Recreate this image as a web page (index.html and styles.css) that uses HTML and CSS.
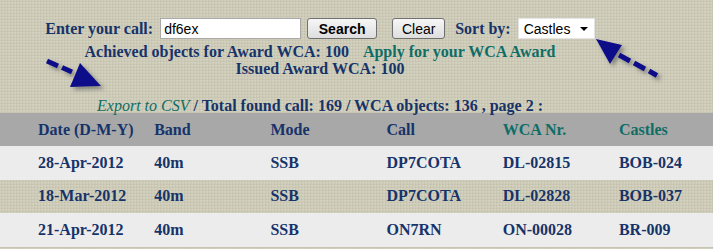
FILE: index.html
```html
<!DOCTYPE html>
<html>
<head>
<meta charset="utf-8">
<link rel="stylesheet" href="styles.css">
</head>
<body>
<div class="page">
  <div class="top">
    <form class="search-row">
      <label class="lbl">Enter your call:</label>
      <input class="call-input" type="text" value="df6ex">
      <button class="btn btn-search" type="button">Search</button>
      <button class="btn btn-clear" type="button">Clear</button>
      <label class="lbl sort-lbl">Sort by:</label>
      <div class="select"><span>Castles</span><span class="caret"></span></div>
    </form>
    <div class="line achieved">Achieved objects for Award WCA: 100 <a class="teal apply">Apply for your WCA Award</a></div>
    <div class="line issued">Issued Award WCA: 100</div>
    <div class="line export"><a class="teal csv">Export to CSV</a> / Total found call: 169 / WCA objects: 136 , page 2 :</div>
  </div>

  <div class="table">
    <div class="tr head">
      <div>Date (D-M-Y)</div><div>Band</div><div>Mode</div><div>Call</div><div class="teal">WCA Nr.</div><div class="teal">Castles</div>
    </div>
    <div class="tr light">
      <div>28-Apr-2012</div><div>40m</div><div>SSB</div><div>DP7COTA</div><div>DL-02815</div><div>BOB-024</div>
    </div>
    <div class="tr">
      <div>18-Mar-2012</div><div>40m</div><div>SSB</div><div>DP7COTA</div><div>DL-02828</div><div>BOB-037</div>
    </div>
    <div class="tr light">
      <div>21-Apr-2012</div><div>40m</div><div>SSB</div><div>ON7RN</div><div>ON-00028</div><div>BR-009</div>
    </div>
  </div>

  <svg class="arrow arrow-left" width="80" height="50" viewBox="0 0 80 50">
    <defs>
      <filter id="sh" x="-30%" y="-30%" width="160%" height="160%">
        <feDropShadow dx="3" dy="3" stdDeviation="2" flood-color="#555" flood-opacity="0.6"/>
      </filter>
    </defs>
    <g filter="url(#sh)" fill="#0b0b8a" stroke="#0b0b8a">
      <line x1="7" y1="11" x2="18" y2="16" stroke-width="5"/>
      <line x1="22" y1="17.5" x2="32" y2="22" stroke-width="5"/>
      <polygon points="40,13 61,36 30,37" stroke="none"/>
    </g>
  </svg>

  <svg class="arrow arrow-right" width="80" height="55" viewBox="0 0 80 55">
    <defs>
      <filter id="sh2" x="-30%" y="-30%" width="160%" height="160%">
        <feDropShadow dx="3" dy="3" stdDeviation="2" flood-color="#555" flood-opacity="0.6"/>
      </filter>
    </defs>
    <g filter="url(#sh2)" fill="#0b0b8a" stroke="#0b0b8a">
      <polygon points="6,9 32,15 20,34" stroke="none"/>
      <line x1="29" y1="25" x2="40" y2="31" stroke-width="5"/>
      <line x1="44" y1="33" x2="55" y2="39" stroke-width="5"/>
      <line x1="59" y1="41" x2="67" y2="45.5" stroke-width="5"/>
    </g>
  </svg>
</div>
</body>
</html>
```

FILE: styles.css
```css
html, body {
  margin: 0;
  padding: 0;
}
body {
  background-color: #cfcdb9;
  background-image:
    repeating-linear-gradient(0deg, rgba(255,255,255,0.06) 0 1px, rgba(0,0,0,0.03) 1px 2px, transparent 2px 3px),
    repeating-linear-gradient(90deg, rgba(255,255,255,0.05) 0 1px, rgba(0,0,0,0.03) 1px 2px, transparent 2px 3px);
  font-family: "Liberation Serif", "Times New Roman", serif;
  font-weight: bold;
  font-size: 16px;
  color: #16336a;
  width: 713px;
  height: 249px;
  overflow: hidden;
}
.page {
  position: relative;
  width: 713px;
  height: 249px;
}
.top {
  width: 640px;
  text-align: center;
  padding-top: 18px;
}
.search-row {
  display: flex;
  justify-content: center;
  align-items: center;
  height: 21px;
  margin: 0;
}
.lbl {
  margin-right: 7px;
}
.sort-lbl {
  margin-left: 10px;
}
.call-input {
  box-sizing: border-box;
  width: 141px;
  height: 21px;
  border: 1px solid #a9a9a9;
  background: #fff;
  font-family: "Liberation Sans", Arial, sans-serif;
  font-size: 14px;
  padding: 0 3px;
  color: #000;
  margin: 0;
}
.btn {
  box-sizing: border-box;
  height: 21px;
  border: 1px solid #707070;
  border-radius: 3px;
  background: linear-gradient(#f6f6f6, #dedede);
  font-family: "Liberation Sans", Arial, sans-serif;
  font-size: 14px;
  color: #000;
  padding: 0;
  margin: 0;
}
.btn-search {
  width: 70px;
  font-weight: bold;
  margin-left: 6px;
}
.btn-clear {
  width: 53px;
  font-weight: normal;
  margin-left: 15px;
}
.select {
  box-sizing: border-box;
  width: 77px;
  height: 21px;
  background: #fff;
  border: 1px solid #e4e4e4;
  display: flex;
  align-items: center;
  justify-content: space-between;
  padding: 0 5px 0 5px;
  font-family: "Liberation Sans", Arial, sans-serif;
  font-size: 14px;
  font-weight: normal;
  color: #000;
}
.caret {
  width: 0;
  height: 0;
  border-left: 4px solid transparent;
  border-right: 4px solid transparent;
  border-top: 4px solid #000;
  margin-right: 1px;
}
.line {
  line-height: 17px;
}
.achieved {
  margin-top: 4px;
}
.teal {
  color: #0f6d66;
}
.apply {
  margin-left: 10px;
}
.export {
  margin-top: 20px;
}
.csv {
  font-style: italic;
  font-weight: normal;
}
.table {
  margin-top: -1px;
}
.tr {
  display: grid;
  grid-template-columns: repeat(6, 116.2px);
  padding-left: 38px;
  height: 33.5px;
  align-items: center;
  white-space: nowrap;
}
.tr.head {
  background: #a8a8a8;
  height: 33px;
}
.tr.light {
  background: #ececec;
}
.arrow {
  position: absolute;
  overflow: visible;
}
.arrow-left {
  left: 40px;
  top: 50px;
}
.arrow-right {
  left: 590px;
  top: 30px;
}
```
